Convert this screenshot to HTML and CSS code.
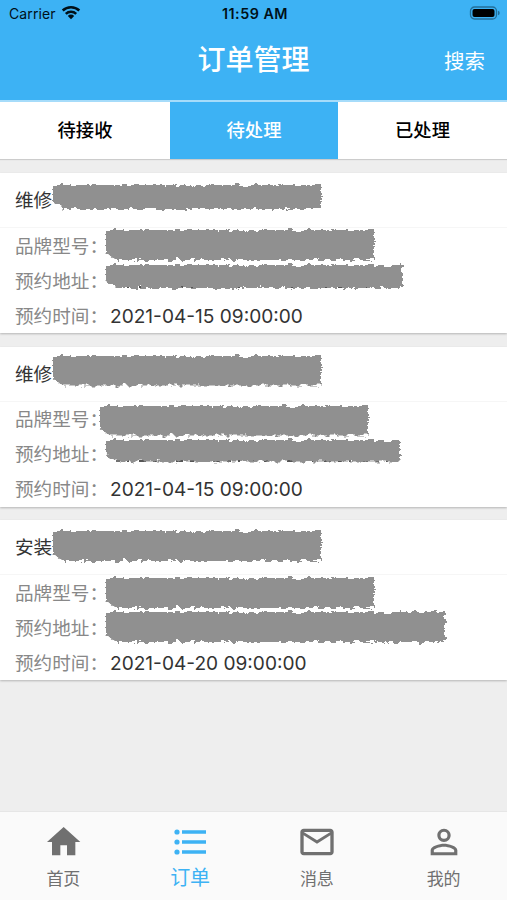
FILE: index.html
```
<!DOCTYPE html>
<html lang="zh-CN">
<head>
<meta charset="utf-8">
<title>订单管理</title>
<link rel="stylesheet" href="styles.css">
</head>
<body>
<svg class="defs" width="0" height="0">
  <filter id="rough" x="-5%" y="-20%" width="110%" height="140%">
    <feTurbulence type="fractalNoise" baseFrequency="0.16 0.26" numOctaves="3" seed="7" />
    <feDisplacementMap in="SourceGraphic" scale="8" xChannelSelector="R" yChannelSelector="G" />
    <feGaussianBlur stdDeviation="0.35" />
  </filter>
</svg>
<div class="app">
  <header class="header">
    <div class="statusBar">
      <div class="carrier">
        <span>Carrier</span>
        <svg width="20" height="15" viewBox="0 0 20 15" fill="none" stroke="#001018" stroke-width="2.5">
          <path d="M1.7 5.5a12 12 0 0 1 16.6 0" />
          <path d="M4.8 8.8a7.5 7.5 0 0 1 10.4 0" />
          <path d="M10 14.2L6.8 10.9a4.5 4.5 0 0 1 6.4 0z" fill="#001018" stroke="none" />
        </svg>
      </div>
      <div class="clock">11:59 AM</div>
      <svg class="battery" width="32" height="15" viewBox="0 0 32 15">
        <rect x="1.5" y="1" width="26" height="12" rx="4" fill="none" stroke="#236f99" stroke-width="1.3" />
        <rect x="3.5" y="3" width="22" height="8" rx="2" fill="#000" />
        <path d="M29 4.7a2.4 2.4 0 0 1 0 4.6z" fill="#236f99" />
      </svg>
    </div>
    <div class="titleBar">
      <h1>订单管理</h1>
      <a class="search">搜索</a>
    </div>
  </header>
  <nav class="tabs">
    <div class="tab">待接收</div>
    <div class="tab active">待处理</div>
    <div class="tab">已处理</div>
  </nav>
  <main class="orders">
    <section class="order first">
      <div class="orderTitle">维修<i class="mask maskName"></i></div>
      <div class="row"><span class="label">品牌型号：</span><i class="mask maskModel"></i></div>
      <div class="row"><span class="label">预约地址：</span><i class="scraps"></i><i class="mask maskAddress"></i></div>
      <div class="row"><span class="label">预约时间：</span><span class="time">2021-04-15 09:00:00</span></div>
    </section>
    <section class="order second">
      <div class="orderTitle">维修<i class="mask maskName"></i></div>
      <div class="row"><span class="label">品牌型号：</span><i class="mask maskModel"></i></div>
      <div class="row"><span class="label">预约地址：</span><i class="scraps"></i><i class="mask maskAddress"></i></div>
      <div class="row"><span class="label">预约时间：</span><span class="time">2021-04-15 09:00:00</span></div>
    </section>
    <section class="order third">
      <div class="orderTitle">安装<i class="mask maskName"></i></div>
      <div class="row"><span class="label">品牌型号：</span><i class="mask maskModel"></i></div>
      <div class="row"><span class="label">预约地址：</span><i class="mask maskAddress"></i></div>
      <div class="row"><span class="label">预约时间：</span><span class="time">2021-04-20 09:00:00</span></div>
    </section>
  </main>
  <nav class="tabBar">
    <div class="item">
      <svg width="40" height="40" viewBox="-0.4 0 24 24"><path fill="currentColor" d="M10 20v-6h4v6h5v-8h3L12 3 2 12h3v8z" /></svg>
      <span>首页</span>
    </div>
    <div class="item current">
      <svg width="40" height="40" viewBox="0 0 40 40" fill="currentColor">
        <circle cx="7" cy="10" r="2.6" /><circle cx="7" cy="20" r="2.6" /><circle cx="7" cy="30" r="2.6" />
        <path d="M12 8.3h24v3.4H12zM12 18.3h24v3.4H12zM12 28.3h24v3.4H12z" />
      </svg>
      <span>订单</span>
    </div>
    <div class="item">
      <svg width="40" height="40" viewBox="0 0 24 24"><path fill="currentColor" d="M20 4H4c-1.1 0-2 .9-2 2v12c0 1.1.9 2 2 2h16c1.1 0 2-.9 2-2V6c0-1.1-.9-2-2-2zm0 14H4V8l8 5 8-5v10zm-8-7L4 6h16l-8 5z" /></svg>
      <span>消息</span>
    </div>
    <div class="item">
      <svg width="40" height="40" viewBox="0 0 24 24"><path fill="currentColor" d="M12 5.9a2.1 2.1 0 1 1 0 4.2 2.1 2.1 0 0 1 0-4.2m0 9c2.97 0 6.1 1.46 6.1 2.1v1.1H5.9V17c0-.64 3.13-2.1 6.1-2.1M12 4C9.79 4 8 5.79 8 8s1.79 4 4 4 4-1.79 4-4-1.79-4-4-4zm0 9c-2.67 0-8 1.34-8 4v3h16v-3c0-2.66-5.33-4-8-4z" /></svg>
      <span>我的</span>
    </div>
  </nav>
</div>
</body>
</html>
```
FILE: styles.css
```
* {
  box-sizing: border-box;
}

body {
  margin: 0;
  background-color: #eee;
  font-family: Inter, "Noto Sans CJK SC", sans-serif;
  color: #333;
}

.defs {
  position: absolute;
}

.app {
  height: 900px;
  display: flex;
  flex-direction: column;
  overflow: hidden;
}

.header {
  height: 102px;
  background-color: #3db2f4;
  border-bottom: 2px solid #a6dcfa;
}

.statusBar {
  height: 27px;
  padding: 0 6px 0 9px;
  display: grid;
  grid-template-columns: 1fr auto 1fr;
  align-items: center;
  font-size: 14px;
  color: #001018;
}

.carrier {
  display: flex;
  align-items: center;
  gap: 5px;
  letter-spacing: 0.1px;
}

.carrier svg {
  margin-top: -2px;
}

.clock {
  font-weight: 600;
  font-size: 14.3px;
  letter-spacing: 0.5px;
}

.battery {
  justify-self: end;
}

.titleBar {
  height: 65px;
  padding: 0 22px;
  display: grid;
  grid-template-columns: 1fr auto 1fr;
  align-items: center;
  color: #fff;
}

.titleBar h1 {
  grid-column: 2;
  margin: 0;
  font-size: 28px;
  font-weight: 500;
  line-height: 40px;
}

.search {
  justify-self: end;
  font-size: 20.5px;
}

.tabs {
  height: 57px;
  display: grid;
  grid-template-columns: 170px 168px 169px;
  background-color: #fff;
  box-shadow: 0 1px 1px #ccc;
}

.tab {
  display: flex;
  align-items: center;
  justify-content: center;
  padding-bottom: 4px;
  font-size: 18.3px;
  font-weight: 500;
  color: #000;
}

.tab.active {
  background-color: #3db2f4;
  color: #fff;
}

.orders {
  flex: 1;
  padding-top: 14px;
  display: flex;
  flex-direction: column;
  gap: 13.5px;
}

.order {
  height: 160px;
  background-color: #fff;
  box-shadow: 0 1px 2px #b5b5b5;
}

.orderTitle,
.row {
  position: relative;
  display: flex;
  align-items: center;
  padding-left: 15px;
  font-size: 18.6px;
}

.orderTitle {
  height: 55px;
  padding-bottom: 3px;
  border-bottom: 1px solid #f6f6f6;
}

.row {
  height: 35px;
}

.label {
  width: 95px;
  margin-top: -3px;
  white-space: nowrap;
  color: #888;
}

.time {
  font-size: 19.1px;
}

/* grey brush strokes over the customer data */
.mask {
  position: absolute;
  z-index: 1;
  left: 106px;
  width: 268px;
  height: 30px;
  filter: url(#rough);
}

.mask::before {
  content: "";
  display: block;
  height: 100%;
  background-color: #909090;
  clip-path: polygon(0 0, 100% 0, 100% 100%, 9px 100%, 0 calc(100% - 8px));
}

.maskName {
  left: 53px;
  top: 9px;
}

.maskModel {
  top: 2px;
}

.maskAddress {
  top: 2px;
}

.first .maskName {
  top: 12px;
  height: 24px;
}

.first .maskAddress {
  width: 296px;
  height: 23px;
}

.second .maskModel {
  left: 100px;
  top: 4px;
}

.second .maskAddress {
  top: 3px;
  width: 294px;
  height: 22px;
}

.third .maskName {
  top: 11px;
}

.third .maskModel {
  top: 3px;
}

.third .maskAddress {
  top: 2px;
  width: 339px;
}

/* bits of the characters left under the strokes */
.scraps {
  position: absolute;
  left: 116px;
  top: 23px;
  width: 278px;
  height: 2px;
  background: repeating-linear-gradient(90deg, #555 0 4px, transparent 4px 11px, #555 11px 13px, transparent 13px 23px, #555 23px 30px, transparent 30px 37px);
}

.tabBar {
  height: 89px;
  display: grid;
  grid-template-columns: repeat(4, 1fr);
  background-color: #fafafa;
  border-top: 1px solid #e6e6e6;
}

.item {
  display: flex;
  flex-direction: column;
  align-items: center;
  padding-top: 9.5px;
  font-size: 17px;
  line-height: 34px;
  color: #707070;
}

.item.current {
  font-size: 20px;
  line-height: 32px;
  color: #3db2f4;
}
```
